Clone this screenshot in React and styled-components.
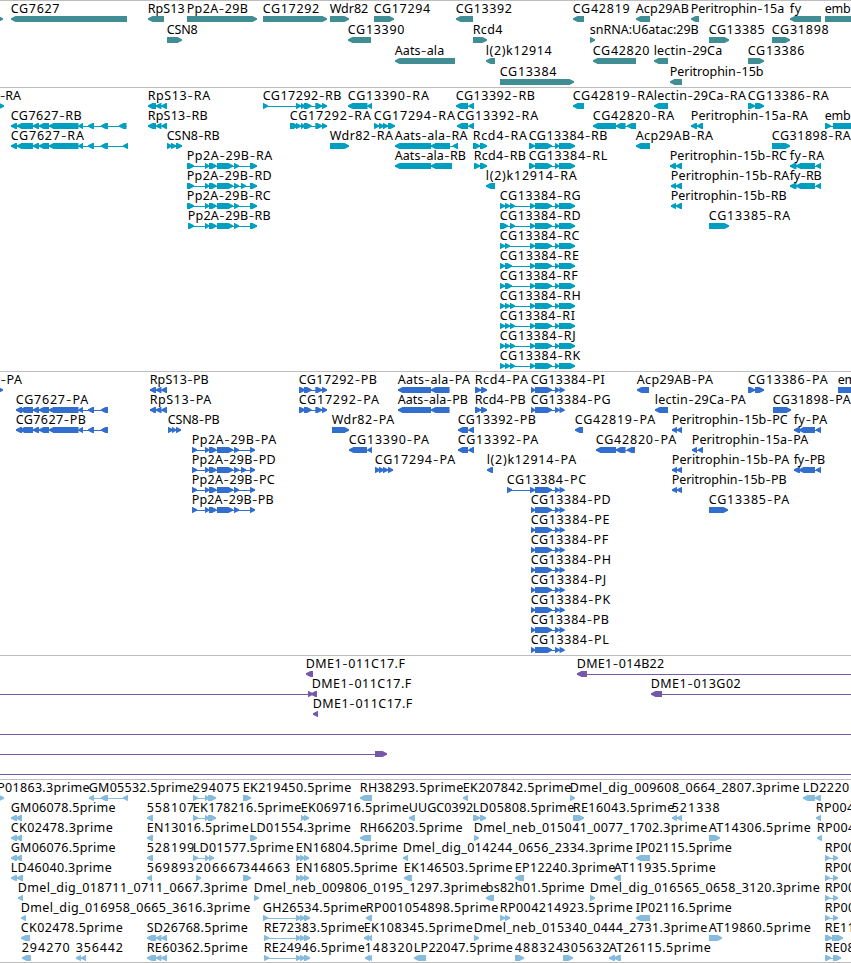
import React from 'react';
import styled, { createGlobalStyle } from 'styled-components';

const GlobalStyle = createGlobalStyle`
  body {
    margin: 0;
    background: #ffffff;
  }
`;

const Browser = styled.main`
  display: flex;
  flex-direction: column;
  width: 851px;
  height: 963px;
  overflow: hidden;
  background: #ffffff;
`;

const TrackPanel = styled.section`
  display: flex;
  flex-direction: column;
  flex: none;
  box-sizing: border-box;
  height: ${props => props.$height}px;
  border-top: 1px solid #bebebe;
  color: ${props => props.$color};
  &:last-child {
    border-bottom: 1px solid #bebebe;
  }
`;

const Row = styled.svg`
  display: block;
  flex: none;
  width: 851px;
  height: ${props => props.$pitch}px;
  overflow: visible;
`;

const Label = styled.text`
  font-family: 'Noto Sans', 'DejaVu Sans', sans-serif;
  font-size: 12.5px;
  fill: #000000;
  white-space: pre;
`;

const Dash = styled.tspan`
  font-family: Inter, 'Noto Sans', sans-serif;
  font-size: 13px;
  font-weight: 300;
`;

const TIP = 5;

// exon pieces of transcripts that share the same gene model
const RPS = [156, 156, 161.5, 161.5, 167];
const CG7627 = [33, 33, 39, 39, 49, 49, 78.5, 78.5, 83, 88, 94, 101, 108];
const PP2A = [205, 209, 209, 216.5, 217, 233, 234, 239];
const CG17292 = [304, 311.5, 315.3, 322, 322, 327];
const CG13384 = [535, 535, 552, 555, 559, 559, 575];
const CG13384P = [535, 535, 552, 555, 559.5, 559.5, 564.5];
const END_5P = [296, 301, 300, 305, 304, 310];

// feature: [name, right edge of name, strand, [start, end, start, end, ...], name start]
const genes = [
  [
    ['', 0, '+', [-10, 3]],
    ['CG7627', 59.3, '-', [11, 127]],
    ['RpS13', 184.5, '-', [148, 164]],
    ['Pp2A-29B', 247.7, '+', [187, 257]],
    ['CG17292', 319, '+', [263, 327]],
    ['Wdr82', 368, '+', [330, 349]],
    ['CG17294', 430, '+', [374, 394]],
    ['CG13392', 511.7, '-', [456, 473]],
    ['CG42819', 629.5, '-', [573, 584]],
    ['Acp29AB', 688.7, '-', [636, 650]],
    ['Peritrophin-15a', 784, '-', [691, 699]],
    ['fy', 801, '-', [790, 821]],
    ['emb', 850.5, '+', [825, 870]],
  ],
  [
    ['CSN8', 197.5, '+', [167, 182]],
    ['CG13390', 404.3, '-', [348, 371]],
    ['Rcd4', 502.3, '+', [473, 487]],
    ['snRNA:U6atac:29B', 698.5, '+', [590, 595]],
    ['CG13385', 764.5, '+', [709, 729]],
    ['CG31898', 828.5, '+', [772, 790]],
  ],
  [
    ['Aats-ala', 444, '-', [395, 455]],
    ['l(2)k12914', 551.5, '-', [486, 495]],
    ['CG42820', 649.3, '-', [593, 636]],
    ['lectin-29Ca', 722, '-', [654, 668]],
    ['CG13386', 804.3, '+', [748, 764]],
  ],
  [
    ['CG13384', 556.3, '+', [500, 574]],
    ['Peritrophin-15b', 763.3, '-', [670, 682]],
  ],
];

const transcripts = [
  [
    ['-RA', 20.7, '+', [-6, 4], 0],
    ['RpS13-RA', 210, '-', [148, ...RPS]],
    ['CG17292-RB', 341.3, '+', [263, 268, 296, 301, 301, 305, ...CG17292]],
    ['CG13390-RA', 428.7, '-', [348, 367.5, 367.5, 372]],
    ['CG13392-RB', 534.7, '-', [456, 468, 468.5, 474]],
    ['CG42819-RA', 653.5, '-', [573, 584]],
    ['lectin-29Ca-RA', 745.7, '-', [654, 668]],
    ['CG13386-RA', 828.5, '+', [748, 755, 755, 764]],
  ],
  [
    ['CG7627-RB', 81.5, '-', [11, 17, 17, ...CG7627, 119, 126.5]],
    ['RpS13-RB', 207.5, '-', [148, ...RPS]],
    ['CG17292-RA', 370.7, '+', [290, 298, 296, 301, 301, 305, ...CG17292]],
    ['CG17294-RA', 454.7, '+', [374, 379, 379, 384, 383, 388, 388, 395]],
    ['CG13392-RA', 538, '-', [457, 468, 468.5, 474]],
    ['CG42820-RA', 674, '-', [593, 616, 616, 625.5, 627, 636]],
    ['Peritrophin-15a-RA', 807.7, '-', [691, 697, 697, 703]],
    ['emb', 850.5, '+', [825, 831, 833, 870]],
  ],
  [
    ['CG7627-RA', 83.7, '-', [11, 17, 17, ...CG7627, 123, 128]],
    ['CSN8-RB', 219.5, '+', [167, 172, 171, 176, 176, 182]],
    ['Wdr82-RA', 392.7, '+', [330, 349]],
    ['Aats-ala-RA', 467.3, '-', [395, 431, 431, 450, 452.7, 458]],
    ['Rcd4-RA', 526.7, '+', [473, 480, 480, 487]],
    ['CG13384-RB', 607.3, '+', [529, ...CG13384]],
    ['Acp29AB-RA', 712.7, '-', [636, 650]],
    ['CG31898-RA', 850.5, '+', [772, 790]],
  ],
  [
    ['Pp2A-29B-RA', 272, '+', [187, 194, ...PP2A, 250, 257]],
    ['Aats-ala-RB', 465.7, '-', [395, 431, 431, 452]],
    ['Rcd4-RB', 525.7, '+', [474, 480, 480, 487]],
    ['CG13384-RL', 607, '+', [529, ...CG13384]],
    ['Peritrophin-15b-RC', 786.7, '-', [670, 676, 676, 682]],
    ['fy-RA', 824, '-', [790, 796.5, 796, 815, 816, 821]],
  ],
  [
    ['Pp2A-29B-RD', 271.5, '+', [187, 194, ...PP2A, 241, 246, 250, 257]],
    ['l(2)k12914-RA', 576.5, '-', [486, 495]],
    ['Peritrophin-15b-RA', 789, '-', [671, 676, 676, 682]],
    ['fy-RB', 821.5, '-', [790, 796.5, 796, 815, 816, 821]],
  ],
  [
    ['Pp2A-29B-RC', 270.5, '+', [187, 194, ...PP2A, 250, 257]],
    ['CG13384-RG', 580.5, '+', [500, 505, 505, 510, 510, 515, 530, ...CG13384]],
    ['Peritrophin-15b-RB', 786.5, '-', [671, 676, 676, 682]],
  ],
  [
    ['Pp2A-29B-RB', 270.5, '+', [188, 194, ...PP2A, 250, 257]],
    ['CG13384-RD', 580.5, '+', [500, 508, 510, 515, 530, ...CG13384]],
    ['CG13385-RA', 790, '+', [709, 729]],
  ],
  [['CG13384-RC', 579.3, '+', [500, 505, 505, 510, 530, ...CG13384]]],
  [['CG13384-RE', 578.7, '+', [500, 505, 505, 512, 530, ...CG13384]]],
  [['CG13384-RF', 577.5, '+', [500, 505, 505, 512, 530, ...CG13384]]],
  [['CG13384-RH', 580.5, '+', [500, 505, 505, 510, 510, 515, 530, ...CG13384]]],
  [['CG13384-RI', 574.7, '+', [500, 505, 505, 510, 510, 515, 530, ...CG13384]]],
  [['CG13384-RJ', 575.5, '+', [500, 505, 505, 510, 510, 515, 530, ...CG13384]]],
  [['CG13384-RK', 580, '+', [500, 505, 505, 510, 510, 515, 530, ...CG13384]]],
];

const proteins = [
  [
    ['-PA', 21.7, '+', [-6, 3], 0.5],
    ['RpS13-PB', 208.5, '-', [150, ...RPS]],
    ['CG17292-PB', 376.7, '+', [299, 305, ...CG17292]],
    ['Aats-ala-PA', 469.7, '-', [398, 431, 431, 449.5]],
    ['Rcd4-PA', 527.7, '+', [475, 481, 481, 487]],
    ['CG13384-PI', 604.5, '+', [531, ...CG13384P]],
    ['Acp29AB-PA', 712.7, '-', [637, 649]],
    ['CG13386-PA', 827.5, '+', [748, 755, 755, 764]],
    ['emb', 863.5, '+', [838, 870]],
  ],
  [
    ['CG7627-PA', 88, '-', [16, 22, 20, ...CG7627]],
    ['RpS13-PA', 211, '-', [150, ...RPS]],
    ['CG17292-PA', 378.7, '+', [299, 305, ...CG17292]],
    ['Aats-ala-PB', 467.7, '-', [398, 431, 431, 449.5]],
    ['Rcd4-PB', 525.5, '+', [475, 481, 481, 487]],
    ['CG13384-PG', 610.5, '+', [531, ...CG13384P]],
    ['lectin-29Ca-PA', 745.5, '-', [655, 668]],
    ['CG31898-PA', 850.5, '+', [773, 791]],
  ],
  [
    ['CG7627-PB', 85.7, '-', [16, 22, 20, ...CG7627]],
    ['CSN8-PB', 219.5, '+', [168, 173, 172, 176, 176, 181]],
    ['Wdr82-PA', 394, '+', [332, 349]],
    ['CG13392-PB', 535.7, '-', [458, 468, 468.5, 474]],
    ['CG42819-PA', 655, '-', [575, 583]],
    ['Peritrophin-15b-PC', 787.5, '-', [672, 677, 677, 682]],
    ['fy-PA', 827, '-', [794, 800, 799, 815, 816, 821]],
  ],
  [
    ['Pp2A-29B-PA', 276, '+', [192, 197, ...PP2A, 250, 255]],
    ['CG13390-PA', 428.7, '-', [349, 367, 367.5, 372]],
    ['CG13392-PA', 538, '-', [458, 468, 468.5, 474]],
    ['CG42820-PA', 676, '-', [596, 616, 616, 625.5, 627, 635]],
    ['Peritrophin-15a-PA', 808, '-', [692, 697, 698, 703]],
  ],
  [
    ['Pp2A-29B-PD', 275.5, '+', [192, 197, ...PP2A, 241, 246, 250, 255]],
    ['CG17294-PA', 455, '+', [375, 380, 379, 384, 383, 388, 388, 393]],
    ['l(2)k12914-PA', 576, '-', [487, 493]],
    ['Peritrophin-15b-PA', 789, '-', [672, 677, 677, 682]],
    ['fy-PB', 825, '-', [794, 800, 799, 815, 816, 821]],
  ],
  [
    ['Pp2A-29B-PC', 274.5, '+', [192, 197, ...PP2A, 250, 255]],
    ['CG13384-PC', 586, '+', [507, 512, 530, ...CG13384P]],
    ['Peritrophin-15b-PB', 786.5, '-', [672, 677, 677, 682]],
  ],
  [
    ['Pp2A-29B-PB', 273.5, '+', [192, 197, ...PP2A, 250, 255]],
    ['CG13384-PD', 610.5, '+', [531, ...CG13384P]],
    ['CG13385-PA', 789, '+', [709, 728]],
  ],
  [['CG13384-PE', 609.3, '+', [531, ...CG13384P]]],
  [['CG13384-PF', 608, '+', [531, ...CG13384P]]],
  [['CG13384-PH', 610.7, '+', [531, ...CG13384P]]],
  [['CG13384-PJ', 606, '+', [531, ...CG13384P]]],
  [['CG13384-PK', 610, '+', [531, ...CG13384P]]],
  [['CG13384-PB', 608.7, '+', [531, ...CG13384P]]],
  [['CG13384-PL', 608.5, '+', [531, ...CG13384P]]],
];

const insertions = [
  [
    ['DME1-011C17.F', 404.7, '-', [306, 313]],
    ['DME1-014B22', 664, '-', [577, 587, 900, 910]],
  ],
  [
    ['', 0, '+', [-20, -10, 308, 313]],
    ['DME1-011C17.F', 411, '-', [311, 317], 312],
    ['DME1-013G02', 740.5, '-', [651, 662, 900, 910]],
  ],
  [['DME1-011C17.F', 412, '-', [313, 318]]],
  [['', 0, '+', [-20, -10, 900, 910]]],
  [['', 0, '+', [-20, -10, 375, 387]]],
  [['', 0, '+', [-20, -10, 900, 910]]],
];

const ests = [
  [
    ['P01863.3prime', 89.3, '+', [-6, 4], -2.5],
    ['GM05532.5prime', 193.5, '-', [89, 94, 101, 108, 123, 128]],
    ['294075', 239.5, '+', [193, 198, 205, 209, 208, 216]],
    ['EK219450.5prime', 351, '+', [243, 251]],
    ['RH38293.5prime', 463, '-', [360, 372]],
    ['EK207842.5prime', 571, '-', [463, 468]],
    ['Dmel_dig_009608_0664_2807.3prime', 799.3, '+', [570, 575]],
    ['LD2220', 849, '-', [803, 815, 815, 821]],
  ],
  [
    ['GM06078.5prime', 115.3, '-', [11, 17, 16, 22]],
    ['558107', 194, '-', [147, 153]],
    ['EK178216.5prime', 301, '+', [193, 198, 205, 209, 208, 216]],
    ['EK069716.5prime', 408.7, '+', [301, 305, 304, 309]],
    ['UUGC0392', 473, '-', [409, 415]],
    ['LD05808.5prime', 574, '+', [473, 480, 480, 486]],
    ['RE16043.5prime', 674, '+', [573, 584]],
    ['521338', 719.5, '-', [672, 677, 677, 682]],
    ['RP004', 854, '-', [816, 821]],
  ],
  [
    ['CK02478.3prime', 112.5, '-', [11, 17, 16, 22]],
    ['EN13016.5prime', 248.5, '-', [147, 153]],
    ['LD01554.3prime', 350.5, '+', [250, 257]],
    ['RH66203.5prime', 462.3, '-', [360, 371]],
    ['Dmel_neb_015041_0077_1702.3prime', 707, '+', [474, 479]],
    ['AT14306.5prime', 810.5, '+', [709, 720]],
    ['RP004', 855, '-', [817, 822]],
  ],
  [
    ['GM06076.5prime', 115.3, '-', [11, 17, 16, 22]],
    ['528199', 194, '-', [147, 153]],
    ['LD01577.5prime', 293.5, '+', [193, 198, 205, 209, 209, 214]],
    ['EN16804.5prime', 397.3, '+', [296, 301, 300, 305, 304, 309]],
    ['Dmel_dig_014244_0656_2334.3prime', 632.5, '-', [403, 408]],
    ['IP02115.5prime', 731.5, '-', [636, 650]],
    ['RP00', 855, '+', [825, 830, 833, 838]],
  ],
  [
    ['LD46040.3prime', 111.5, '-', [11, 17, 17, 23]],
    ['569893', 194, '-', [147, 152]],
    ['206667', 243.5, '+', [196, 201]],
    ['344663', 290, '+', [243, 251]],
    ['EN16805.5prime', 397.3, '+', [296, 301, 300, 305, 304, 309]],
    ['EK146503.5prime', 512.3, '-', [404, 412]],
    ['EP12240.3prime', 615, '-', [515, 524]],
    ['AT11935.5prime', 715.5, '-', [614, 621]],
    ['RP00', 855, '+', [825, 830, 833, 838]],
  ],
  [
    ['Dmel_dig_018711_0711_0667.3prime', 247.3, '-', [18, 23]],
    ['Dmel_neb_009806_0195_1297.3prime', 487, '+', [254, 259]],
    ['bs82h01.5prime', 584.3, '-', [486, 494]],
    ['Dmel_dig_016565_0658_3120.3prime', 819.5, '+', [590, 595]],
    ['RP00', 855, '+', [825, 830, 833, 838]],
  ],
  [
    ['Dmel_dig_016958_0665_3616.3prime', 250, '-', [21, 26]],
    ['GH26534.5prime', 366.5, '+', [263, 268, ...END_5P]],
    ['RP001054898.5prime', 498, '-', [366, 372]],
    ['RP004214923.5prime', 632.5, '+', [500, 505, 505, 510]],
    ['IP02116.5prime', 731.5, '-', [636, 650]],
    ['RP00', 855, '+', [825, 830, 833, 838]],
  ],
  [
    ['CK02478.5prime', 122.5, '-', [21, 30]],
    ['SD26768.5prime', 247.5, '-', [147, ...RPS]],
    ['RE72383.5prime', 364.3, '+', [264, 269, ...END_5P]],
    ['EK108345.5prime', 472.5, '-', [364, 369, 368, 372]],
    ['Dmel_neb_015340_0444_2731.3prime', 707, '+', [474, 479]],
    ['AT19860.5prime', 810.5, '+', [709, 722]],
    ['RE11', 854.5, '+', [825, 832, 832, 843]],
  ],
  [
    ['294270', 69.5, '-', [22, 31]],
    ['356442', 122.7, '-', [76, 81, 81, 86]],
    ['RE60362.5prime', 247.5, '-', [147, ...RPS]],
    ['RE24946.5prime', 364.5, '+', [264, 269, ...END_5P]],
    ['148320', 412.5, '-', [365, 370, 368, 372]],
    ['LP22047.5prime', 512.5, '-', [414, 426]],
    ['488324', 563, '+', [515, 524]],
    ['305632', 609.5, '+', [563, 573]],
    ['AT26115.5prime', 710.5, '-', [609, 615, 614, 621]],
    ['RE08', 854.5, '+', [825, 831, 833, 841]],
  ],
];

const tracks = [
  { id: 'genes', color: '#408e93', height: 87, pitch: 21, rows: genes },
  { id: 'transcripts', color: '#009fc0', height: 284, pitch: 20, rows: transcripts },
  { id: 'proteins', color: '#326ecd', height: 284, pitch: 20, rows: proteins },
  { id: 'insertions', color: '#7657a8', height: 124, pitch: 20, rows: insertions },
  { id: 'ests', color: '#85bbdd', height: 184, pitch: 20, rows: ests },
];

// block with a slightly blunt tip on the side the strand points to
const exonPath = (a, b, strand) => {
  const tip = Math.min(TIP, b - a);
  return strand === '-'
    ? `M${a} 17.2L${a + tip * 0.9} 15H${b}V21H${a + tip * 0.9}L${a} 18.8Z`
    : `M${b} 17.2L${b - tip * 0.9} 15H${a}V21H${b - tip * 0.9}L${b} 18.8Z`;
};

// the dashes come from a font with a longer hyphen
const splitName = name =>
  name.split('-').map((part, i) => (
    <React.Fragment key={i}>
      {i > 0 && <Dash dy="1">-</Dash>}
      {i > 0 ? <tspan dy="-1">{part}</tspan> : part}
    </React.Fragment>
  ));

const Feature = ({ name, right, strand, exons, nameStart }) => {
  const start = exons[0];
  const end = exons[exons.length - 1];
  const x = nameStart === undefined ? start : nameStart;
  const paths = [];
  for (let i = 0; i < exons.length; i += 2) {
    paths.push(exonPath(exons[i], exons[i + 1], strand));
  }
  return (
    <g>
      {exons.length > 2 && (
        <rect x={start} y="18" width={end - start} height="1" fill="currentColor" />
      )}
      {paths.map((d, i) => <path key={i} d={d} fill="currentColor" />)}
      {name && (
        <Label x={x - 0.3} y="12" textLength={right - x + 0.5}>
          {splitName(name)}
        </Label>
      )}
    </g>
  );
};

const Track = ({ color, height, pitch, rows }) => (
  <TrackPanel $color={color} $height={height}>
    {rows.map((row, i) => (
      <Row key={i} $pitch={pitch}>
        {row.map(([name, right, strand, exons, nameStart], j) => (
          <Feature
            key={j}
            name={name}
            right={right}
            strand={strand}
            exons={exons}
            nameStart={nameStart}
          />
        ))}
      </Row>
    ))}
  </TrackPanel>
);

const App = () => (
  <>
    <GlobalStyle />
    <Browser>
      {tracks.map(track => <Track key={track.id} {...track} />)}
    </Browser>
  </>
);

export default App;
